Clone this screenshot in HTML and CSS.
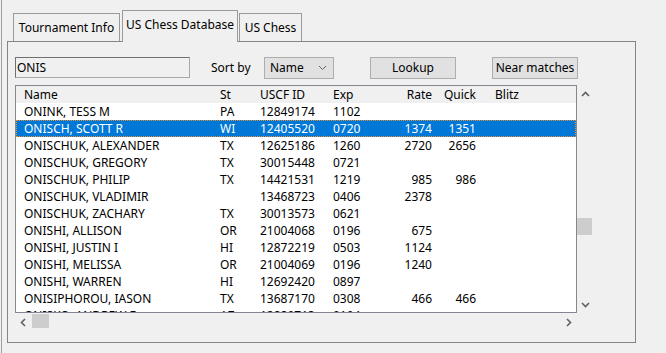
FILE: index.html
```html
<!DOCTYPE html>
<html>
<head>
<meta charset="utf-8">
<link rel="stylesheet" href="styles.css">
</head>
<body>
<div class="window">
  <div class="tabs">
    <div class="tab t1">Tournament Info</div>
    <div class="tab active">US Chess Database</div>
    <div class="tab t3">US Chess</div>
  </div>
  <div class="panel">
    <div class="toolbar">
      <div class="search">ONIS</div>
      <span class="sortlabel">Sort by</span>
      <div class="select"><span>Name</span><svg width="9" height="6" viewBox="0 0 9 6"><path d="M1 1 L4.5 4.5 L8 1" fill="none" stroke="#606060" stroke-width="1"/></svg></div>
      <div class="btn lookup">Lookup</div>
      <div class="btn near">Near matches</div>
    </div>
    <div class="listwrap">
      <div class="list">
        <div class="row head"><span>Name</span><span>St</span><span>USCF ID</span><span>Exp</span><span class="r">Rate</span><span class="r">Quick</span><span></span><span>Blitz</span></div>
        <div class="row"><span>ONINK, TESS M</span><span>PA</span><span>12849174</span><span>1102</span><span class="r"></span><span class="r"></span><span></span><span></span></div>
        <div class="row sel"><span>ONISCH, SCOTT R</span><span>WI</span><span>12405520</span><span>0720</span><span class="r">1374</span><span class="r">1351</span><span></span><span></span></div>
        <div class="row"><span>ONISCHUK, ALEXANDER</span><span>TX</span><span>12625186</span><span>1260</span><span class="r">2720</span><span class="r">2656</span><span></span><span></span></div>
        <div class="row"><span>ONISCHUK, GREGORY</span><span>TX</span><span>30015448</span><span>0721</span><span class="r"></span><span class="r"></span><span></span><span></span></div>
        <div class="row"><span>ONISCHUK, PHILIP</span><span>TX</span><span>14421531</span><span>1219</span><span class="r">985</span><span class="r">986</span><span></span><span></span></div>
        <div class="row"><span>ONISCHUK, VLADIMIR</span><span></span><span>13468723</span><span>0406</span><span class="r">2378</span><span class="r"></span><span></span><span></span></div>
        <div class="row"><span>ONISCHUK, ZACHARY</span><span>TX</span><span>30013573</span><span>0621</span><span class="r"></span><span class="r"></span><span></span><span></span></div>
        <div class="row"><span>ONISHI, ALLISON</span><span>OR</span><span>21004068</span><span>0196</span><span class="r">675</span><span class="r"></span><span></span><span></span></div>
        <div class="row"><span>ONISHI, JUSTIN I</span><span>HI</span><span>12872219</span><span>0503</span><span class="r">1124</span><span class="r"></span><span></span><span></span></div>
        <div class="row"><span>ONISHI, MELISSA</span><span>OR</span><span>21004069</span><span>0196</span><span class="r">1240</span><span class="r"></span><span></span><span></span></div>
        <div class="row"><span>ONISHI, WARREN</span><span>HI</span><span>12692420</span><span>0897</span><span class="r"></span><span class="r"></span><span></span><span></span></div>
        <div class="row"><span>ONISIPHOROU, IASON</span><span>TX</span><span>13687170</span><span>0308</span><span class="r">466</span><span class="r">466</span><span></span><span></span></div>
        <div class="row"><span>ONISKO, ANDREW E</span><span>AZ</span><span>12880713</span><span>0104</span><span class="r"></span><span class="r"></span><span></span><span></span></div>
      </div>
      <div class="vscroll">
        <div class="arrow"><svg width="9" height="6" viewBox="0 0 9 6"><path d="M1 5 L4.5 1.5 L8 5" fill="none" stroke="#606060" stroke-width="1.6"/></svg></div>
        <div class="vtrack"><div class="vthumb"></div></div>
        <div class="arrow"><svg width="9" height="6" viewBox="0 0 9 6"><path d="M1 1 L4.5 4.5 L8 1" fill="none" stroke="#606060" stroke-width="1.6"/></svg></div>
      </div>
      <div class="hscroll">
        <div class="harrow"><svg width="6" height="9" viewBox="0 0 6 9"><path d="M5 1 L1.5 4.5 L5 8" fill="none" stroke="#606060" stroke-width="1.6"/></svg></div>
        <div class="htrack"><div class="hthumb"></div></div>
        <div class="harrow"><svg width="6" height="9" viewBox="0 0 6 9"><path d="M1 1 L4.5 4.5 L1 8" fill="none" stroke="#606060" stroke-width="1.6"/></svg></div>
      </div>
    </div>
  </div>
</div>
</body>
</html>
```
FILE: styles.css
```css
* { box-sizing: border-box; }
html, body {
  margin: 0;
  padding: 0;
  background: #f0f0f0;
  width: 666px;
  height: 353px;
  overflow: hidden;
  font-family: "Noto Sans", "Open Sans", sans-serif;
  font-size: 12px;
  color: #000;
}
.window {
  margin-left: 1px;
  height: 353px;
  border-left: 1px solid #a0a0a0;
}
.tabs {
  display: flex;
  align-items: flex-end;
  padding-top: 10px;
  padding-left: 11px;
  margin-bottom: -1px;
  position: relative;
  z-index: 1;
}
.tab {
  border: 1px solid #9a9a9a;
  border-bottom: none;
  background: #f0f0f0;
  padding-top: 5px;
  line-height: 17px;
  text-align: center;
  white-space: nowrap;
}
.t1 { width: 107px; height: 28px; margin-bottom: 1px; }
.active { width: 116px; height: 32px; margin-left: 2px; }
.t3 { width: 63px; height: 28px; margin-bottom: 1px; margin-left: 1px; }
.panel {
  margin-left: 5px;
  width: 629px;
  height: 302px;
  border: 1px solid #858585;
}
.toolbar {
  display: flex;
  align-items: flex-start;
  margin-top: 15px;
  padding-left: 7px;
  height: 22px;
}
.search {
  width: 175px;
  height: 21px;
  border: 1px solid #a8a8a8;
  border-top-color: #707070;
  border-left-color: #707070;
  padding-left: 1px;
  line-height: 19px;
  background: #f0f0f0;
}
.sortlabel {
  margin-left: 21px;
  width: 53px;
  line-height: 22px;
}
.select {
  width: 70px;
  height: 22px;
  border: 1px solid #adadad;
  background: #e1e1e1;
  display: flex;
  align-items: center;
  justify-content: space-between;
  padding: 0 6px 0 5px;
  line-height: 20px;
}
.btn {
  width: 86px;
  height: 22px;
  border: 1px solid #adadad;
  background: #e1e1e1;
  text-align: center;
  line-height: 20px;
  margin-left: 36px;
}
.listwrap {
  margin-top: 6px;
  margin-left: 7px;
  display: grid;
  grid-template-columns: 562px 16px;
  grid-template-rows: 228px 18px;
}
.list {
  border: 1px solid #828790;
  background: #fff;
  overflow: hidden;
}
.row {
  display: grid;
  grid-template-columns: 196px 40px 73px 40px 59px 44px 19px 60px;
  padding-left: 8px;
  height: 17px;
  line-height: 17px;
  white-space: nowrap;
}
.row .r { text-align: right; }
.head { background: #f0f0f0; }
.sel {
  background: #0078d7;
  color: #fff;
  outline: 1px dotted #e6923a;
  outline-offset: -1px;
}
.vscroll {
  display: flex;
  flex-direction: column;
}
.arrow {
  height: 17px;
  display: flex;
  align-items: center;
  justify-content: center;
}
.vtrack { flex: 1; }
.vthumb {
  margin-top: 116px;
  width: 15px;
  height: 17px;
  background: #cdcdcd;
}
.hscroll {
  display: flex;
  align-items: stretch;
}
.harrow {
  width: 16px;
  display: flex;
  align-items: center;
  justify-content: center;
}
.htrack { flex: 1; }
.hthumb {
  margin-top: 1px;
  margin-left: 1px;
  width: 17px;
  height: 14px;
  background: #cdcdcd;
}
```
